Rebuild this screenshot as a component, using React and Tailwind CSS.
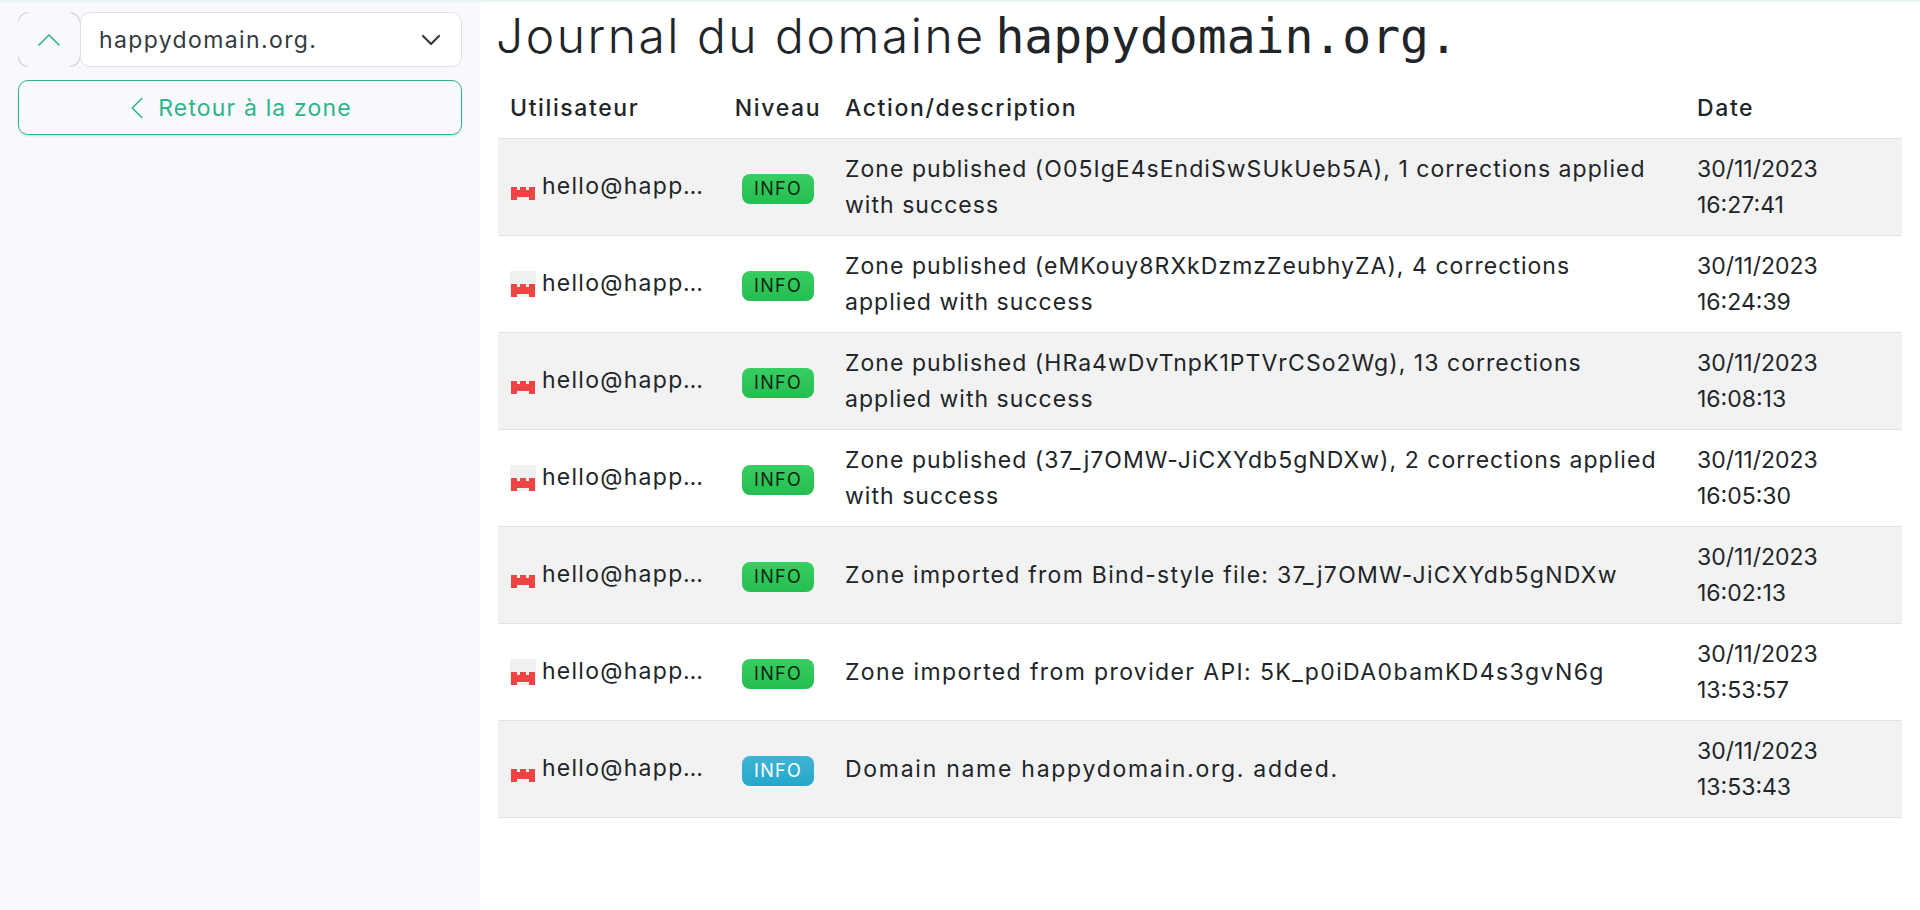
import { ChevronUp, ChevronDown, ChevronLeft } from 'lucide-react'

const rows = [
  { action: 'Zone published (O05IgE4sEndiSwSUkUeb5A), 1 corrections applied with success', date: '30/11/2023', time: '16:27:41' },
  { action: 'Zone published (eMKouy8RXkDzmzZeubhyZA), 4 corrections applied with success', date: '30/11/2023', time: '16:24:39' },
  { action: 'Zone published (HRa4wDvTnpK1PTVrCSo2Wg), 13 corrections applied with success', date: '30/11/2023', time: '16:08:13' },
  { action: 'Zone published (37_j7OMW-JiCXYdb5gNDXw), 2 corrections applied with success', date: '30/11/2023', time: '16:05:30' },
  { action: 'Zone imported from Bind-style file: 37_j7OMW-JiCXYdb5gNDXw', date: '30/11/2023', time: '16:02:13', spacing: 'tracking-[0.055em]' },
  { action: 'Zone imported from provider API: 5K_p0iDA0bamKD4s3gvN6g', date: '30/11/2023', time: '13:53:57', spacing: 'tracking-[0.06em]' },
  { action: 'Domain name happydomain.org. added.', date: '30/11/2023', time: '13:53:43', spacing: 'tracking-[0.075em]', blue: true },
]

function Avatar() {
  return (
    <svg viewBox="0 0 26 26" className="h-[26px] w-[26px] shrink-0">
      <path fill="#ef4444" d="M1 13h6v3h3v-3h6v3h3v-3h6v13h-6v-3H7v3H1z" />
    </svg>
  )
}

export default function App() {
  return (
    <div className="flex h-[910px] overflow-hidden border-t-2 border-[#eaf6f3] bg-white font-['Inter','Noto_Sans',sans-serif] text-[23px] tracking-[0.045em] text-[#212529]">
      <aside className="w-[480px] shrink-0 bg-[#f8f9fc] px-[18px] pt-[10px]">
        <div className="flex h-[55px]">
          <button className="relative flex w-[62px] items-center justify-center text-[#2fb48c]">
            <span className="absolute left-0 top-0 h-[10px] w-[10px] rounded-tl-[10px] border-l border-t border-[#c9ccd1]" />
            <span className="absolute right-0 top-0 h-[10px] w-[10px] rounded-tr-[10px] border-r border-t border-[#c9ccd1]" />
            <span className="absolute bottom-0 left-0 h-[10px] w-[10px] rounded-bl-[10px] border-b border-l border-[#c9ccd1]" />
            <span className="absolute bottom-0 right-0 h-[10px] w-[10px] rounded-br-[10px] border-b border-r border-[#c9ccd1]" />
            <ChevronUp size={40} strokeWidth={1} />
          </button>
          <div className="flex flex-1 items-center justify-between rounded-[10px] border border-[#dee2e6] bg-white pl-[18px] pr-[14px] text-[#343a40]">
            <span className="translate-y-px tracking-[0.06em]">happydomain.org.</span>
            <ChevronDown size={32} strokeWidth={1.6} />
          </div>
        </div>
        <button className="mt-[13px] flex h-[55px] w-full items-center justify-center gap-[2px] rounded-[10px] border border-[#2fb48c] text-[#2fb48c] shadow-sm">
          <span className="-ml-[10px] flex">
            <ChevronLeft size={38} strokeWidth={1} />
          </span>
          <span className="translate-y-px tracking-[0.05em]">Retour à la zone</span>
        </button>
      </aside>
      <main className="min-w-0 flex-1 pl-[18px] pr-[18px]">
        <h1 className="-ml-[2px] mt-[4px] h-[60px] whitespace-nowrap text-[48px] leading-[60px] font-light tracking-[0.052em] text-[#212529]">
          Journal du domaine <span className="-ml-[6px] font-['DejaVu_Sans_Mono',monospace] font-normal tracking-normal">happydomain.org.</span>
        </h1>
        <table className="mt-[18px] w-[1404px] table-fixed border-collapse">
          <colgroup>
            <col className="w-[225px]" />
            <col className="w-[110px]" />
            <col className="w-[852px]" />
            <col className="w-[217px]" />
          </colgroup>
          <thead>
            <tr className="border-b border-[#dee2e6] text-left tracking-[0.07em]">
              <th className="h-[54px] px-3 pb-[6px] font-medium">Utilisateur</th>
              <th className="whitespace-nowrap px-0 pb-[6px] text-center font-medium">Niveau</th>
              <th className="px-3 pb-[6px] font-medium">Action/description</th>
              <th className="px-3 pb-[6px] font-medium">Date</th>
            </tr>
          </thead>
          <tbody>
            {rows.map((r, i) => (
              <tr key={r.time} className={'border-b border-[#dee2e6] ' + (i % 2 === 0 ? 'bg-[#f2f2f2]' : 'bg-white')}>
                <td className="h-[97px] px-3">
                  <div className="flex items-center gap-[6px]">
                    <span className={'flex ' + (i % 2 === 0 ? '' : 'bg-[#f0f0f0]')}>
                      <Avatar />
                    </span>
                    <span className="truncate tracking-[0.055em]">hello@happydomain.org</span>
                  </div>
                </td>
                <td className="px-0 text-center">
                  <span className={'inline-flex h-[30px] w-[72px] translate-y-px items-center justify-center rounded-[8px] text-[18px] tracking-[0.07em] ' + (r.blue ? 'bg-gradient-to-b from-[#3fb4d4] to-[#22a7cb] text-white' : 'bg-gradient-to-b from-[#38cf62] to-[#25bd50] text-[#0b2413]')}>
                    INFO
                  </span>
                </td>
                <td className={'pl-3 pr-[24px] leading-[36px] ' + (r.spacing || '')}>{r.action}</td>
                <td className="px-3 leading-[36px] tracking-normal">
                  {r.date}
                  <br />
                  {r.time}
                </td>
              </tr>
            ))}
          </tbody>
        </table>
      </main>
    </div>
  )
}
